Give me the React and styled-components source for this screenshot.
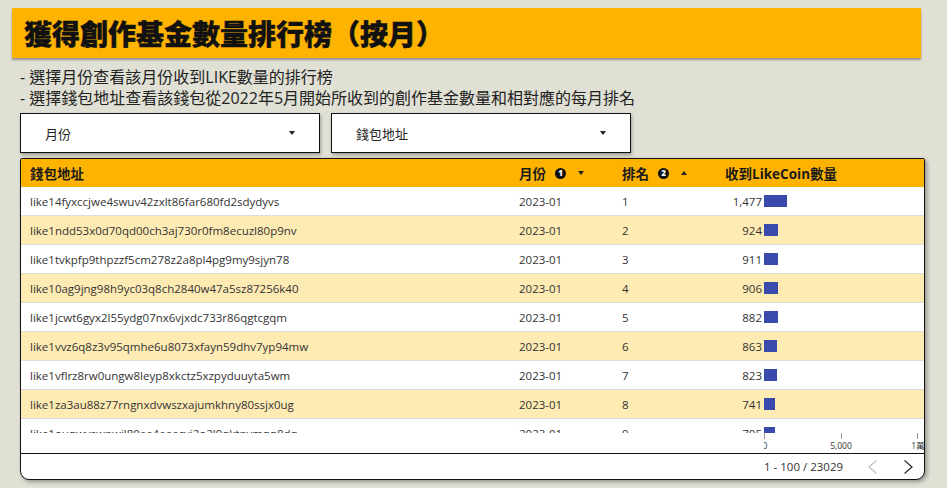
import React from "react";
import styled, { createGlobalStyle } from "styled-components";

const Global = createGlobalStyle`
  html, body { margin: 0; padding: 0; background: #e0e0d5; }
  body { font-family: "Open Sans", "Noto Sans CJK TC", sans-serif; color: #222; }
  * { box-sizing: border-box; }
`;

const CJK = `"Open Sans", "Noto Sans CJK TC", sans-serif`;

const Page = styled.div`
  width: 947px;
  height: 488px;
  padding: 8px 0 0 12px;
  overflow: hidden;
`;

const Banner = styled.header`
  width: 909px;
  height: 50px;
  background: #fdb300;
  box-shadow: 0 2px 2px rgba(0, 0, 0, 0.35);
  display: flex;
  align-items: center;
  padding-left: 12px;
`;

const Title = styled.h1`
  margin: 0;
  font-family: ${CJK};
  font-size: 28px;
  font-weight: 900;
  color: #111;
  -webkit-text-stroke: 0.4px #111;
`;

const Content = styled.div`
  margin-left: 8px;
  width: 905px;
`;

const Notes = styled.div`
  margin-top: 9px;
  font-family: ${CJK};
  font-size: 16px;
  line-height: 21px;
  color: #222;
`;

const Filters = styled.div`
  display: flex;
  gap: 11px;
  margin-top: 4px;
`;

const Select = styled.div`
  width: 300px;
  height: 40px;
  background: #fff;
  border: 1px solid #111;
  box-shadow: 1px 2px 3px rgba(0, 0, 0, 0.3);
  display: flex;
  align-items: center;
  justify-content: space-between;
  padding: 0 24px 0 24px;
  font-family: ${CJK};
  font-size: 13px;
  color: #222;
`;

const Caret = styled.span`
  width: 0;
  height: 0;
  border-left: 3px solid transparent;
  border-right: 3px solid transparent;
  ${(p) =>
    p.$up
      ? "border-bottom: 4px solid #222;"
      : "border-top: 4px solid #222;"}
  display: inline-block;
`;

const Card = styled.div`
  margin-top: 5px;
  width: 905px;
  height: 322px;
  background: #fff;
  border: 1px solid #111;
  border-radius: 2px 2px 9px 9px;
  box-shadow: 2px 2px 4px rgba(0, 0, 0, 0.35);
  overflow: hidden;
  display: flex;
  flex-direction: column;
`;

const cols = "489px 103px 103px 1fr";

const HeadRow = styled.div`
  display: grid;
  grid-template-columns: ${cols};
  padding-left: 9px;
  height: 28px;
  flex-shrink: 0;
  background: #fdb300;
  align-items: center;
  font-family: ${CJK};
  font-weight: 700;
  font-size: 13.5px;
  color: #1a1a1a;
`;

const HeadCell = styled.div`
  display: flex;
  align-items: center;
  white-space: nowrap;
`;

const Badge = styled.span`
  width: 11px;
  height: 11px;
  border-radius: 50%;
  background: #111;
  color: #fff;
  font-family: "Open Sans", sans-serif;
  font-size: 8px;
  font-weight: 800;
  display: inline-flex;
  align-items: center;
  justify-content: center;
  margin: 0 12px 0 9px;
  line-height: 1;
`;

const Body = styled.div`
  height: 246px;
  flex-shrink: 0;
  overflow: hidden;
`;

const Row = styled.div`
  display: grid;
  grid-template-columns: ${cols};
  padding-left: 9px;
  height: 29px;
  align-items: center;
  background: ${(p) => (p.$alt ? "#feebb3" : "#fff")};
  border-bottom: 1px solid #dedede;
  font-size: 11.5px;
  color: #333;
`;

const Cell = styled.div`
  white-space: nowrap;
`;

const ValueCell = styled.div`
  display: flex;
  align-items: center;
  gap: 2px;
`;

const Num = styled.span`
  width: 37px;
  text-align: right;
`;

const Bar = styled.span`
  height: 12px;
  background: #3a4aac;
  display: inline-block;
`;

const AxisRow = styled.div`
  display: grid;
  grid-template-columns: ${cols};
  padding-left: 9px;
  height: 21px;
  flex-shrink: 0;
  border-bottom: 1px solid #111;
`;

const AxisHolder = styled.div`
  padding-left: 39px;
  overflow: hidden;
`;

const Footer = styled.div`
  display: flex;
  align-items: center;
  flex: 1;
  padding-left: 743px;
  font-size: 11.5px;
  color: #333;
  white-space: nowrap;
`;

const PageText = styled.span`
  margin-right: 25px;
`;

const NavBtn = styled.span`
  display: inline-flex;
  color: ${(p) => (p.$disabled ? "#c4c4c4" : "#333")};
  margin-right: ${(p) => (p.$gap ? "27px" : "0")};
`;

function Chevron({ dir }) {
  const pts = dir === "left" ? "8.5,0.5 1,7 8.5,13.5" : "0.5,0.5 8,7 0.5,13.5";
  return (
    <svg width="9" height="14" viewBox="0 0 9 14">
      <polyline points={pts} fill="none" stroke="currentColor" strokeWidth="1.3" />
    </svg>
  );
}

const rows = [
  ["like14fyxccjwe4swuv42zxlt86far680fd2sdydyvs", 1477],
  ["like1ndd53x0d70qd00ch3aj730r0fm8ecuzl80p9nv", 924],
  ["like1tvkpfp9thpzzf5cm278z2a8pl4pg9my9sjyn78", 911],
  ["like10ag9jng98h9yc03q8ch2840w47a5sz87256k40", 906],
  ["like1jcwt6gyx2l55ydg07nx6vjxdc733r86qgtcgqm", 882],
  ["like1vvz6q8z3v95qmhe6u8073xfayn59dhv7yp94mw", 863],
  ["like1vflrz8rw0ungw8leyp8xkctz5xzpyduuyta5wm", 823],
  ["like1za3au88z77rngnxdvwszxajumkhny80ssjx0ug", 741],
  ["like1ouqwvswpwjl80aa4aeecvj2o2l9qktpvmqq8dq", 705],
  ["like1x8f3k2m9qz7w4e6r5t0y1u2i3o4p5a6s7d8f9g", 690],
];

const SCALE = 15.35 / 1000;

function Axis() {
  return (
    <svg width="170" height="21" style={{ display: "block" }}>
      <g stroke="#9a9a9a" strokeWidth="1">
        <line x1="0.5" y1="0" x2="0.5" y2="6" />
        <line x1="77.5" y1="0" x2="77.5" y2="6" />
        <line x1="153.5" y1="0" x2="153.5" y2="6" />
      </g>
      <g
        fontFamily='"Open Sans", "Noto Sans CJK TC", sans-serif'
        fontSize="8.5"
        fill="#333"
        textAnchor="middle"
      >
        <text x="1" y="16">0</text>
        <text x="77" y="16">5,000</text>
        <text x="154" y="16">1萬</text>
      </g>
    </svg>
  );
}

export default function App() {
  return (
    <>
      <Global />
      <Page>
        <Banner>
          <Title>獲得創作基金數量排行榜（按月）</Title>
        </Banner>
        <Content>
          <Notes>
            <div>- 選擇月份查看該月份收到LIKE數量的排行榜</div>
            <div>- 選擇錢包地址查看該錢包從2022年5月開始所收到的創作基金數量和相對應的每月排名</div>
          </Notes>
          <Filters>
            <Select>
              <span>月份</span>
              <Caret />
            </Select>
            <Select>
              <span>錢包地址</span>
              <Caret />
            </Select>
          </Filters>
          <Card>
            <HeadRow>
              <HeadCell>錢包地址</HeadCell>
              <HeadCell>
                月份<Badge>1</Badge>
                <Caret />
              </HeadCell>
              <HeadCell>
                排名<Badge>2</Badge>
                <Caret $up />
              </HeadCell>
              <HeadCell>收到LikeCoin數量</HeadCell>
            </HeadRow>
            <Body>
              {rows.map(([addr, v], i) => (
                <Row key={addr} $alt={i % 2 === 1}>
                  <Cell>{addr}</Cell>
                  <Cell>2023-01</Cell>
                  <Cell>{i + 1}</Cell>
                  <ValueCell>
                    <Num>{v.toLocaleString("en-US")}</Num>
                    <Bar style={{ width: `${v * SCALE}px` }} />
                  </ValueCell>
                </Row>
              ))}
            </Body>
            <AxisRow>
              <div />
              <div />
              <div />
              <AxisHolder>
                <Axis />
              </AxisHolder>
            </AxisRow>
            <Footer>
              <PageText>1 - 100 / 23029</PageText>
              <NavBtn $disabled $gap>
                <Chevron dir="left" />
              </NavBtn>
              <NavBtn>
                <Chevron dir="right" />
              </NavBtn>
            </Footer>
          </Card>
        </Content>
      </Page>
    </>
  );
}
